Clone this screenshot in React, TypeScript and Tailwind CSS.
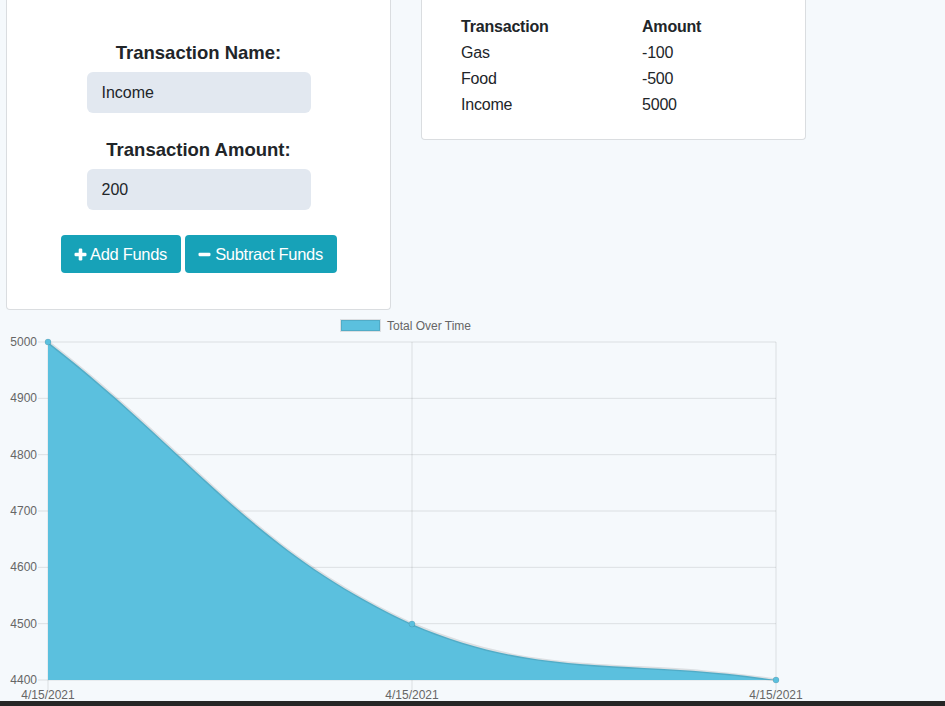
import React from "react";

const FONT = { fontFamily: '"Liberation Sans", Arial, sans-serif' };

function PlusIcon() {
  return (
    <svg width="13" height="13" viewBox="0 0 13 13" className="shrink-0">
      <rect x="4.7" y="0.5" width="3.6" height="12" rx="1.2" fill="white" />
      <rect x="0.5" y="4.7" width="12" height="3.6" rx="1.2" fill="white" />
    </svg>
  );
}

function MinusIcon() {
  return (
    <svg width="13" height="13" viewBox="0 0 13 13" className="shrink-0">
      <rect x="0.5" y="4.8" width="12" height="3.4" rx="1.1" fill="white" />
    </svg>
  );
}

const rows = [
  { name: "Gas", amount: "-100" },
  { name: "Food", amount: "-500" },
  { name: "Income", amount: "5000" },
];

function Chart() {
  const top = 31;
  const step = 338 / 6;
  const yLabels = ["5000", "4900", "4800", "4700", "4600", "4500", "4400"];
  const xs = [48, 412, 776];
  const grid = "rgba(0,0,0,0.1)";
  const curve =
    "M48,31 C193.6,143.8 250.2,237.9 412,313 C541.4,369 630.4,346.6 776,369";
  return (
    <svg width="830" height="390" viewBox="0 0 830 390" className="block shrink-0 mt-[1px]" style={FONT}>
      {/* legend */}
      <rect x="341" y="9" width="39" height="11" fill="#5bc0de" stroke="rgba(0,0,0,0.1)" strokeWidth="2" />
      <text x="387" y="19" fontSize="12" fill="#666">Total Over Time</text>
      {/* horizontal grid */}
      {yLabels.map((l, i) => {
        const y = top + i * step;
        return (
          <g key={l}>
            <line x1="38" x2="776" y1={y} y2={y} stroke={grid} strokeWidth="1" />
            <text x="37" y={y + 4} fontSize="12" fill="#666" textAnchor="end">{l}</text>
          </g>
        );
      })}
      {/* vertical grid */}
      {xs.map((x) => (
        <line key={x} x1={x} x2={x} y1={top} y2={379} stroke={grid} strokeWidth="1" />
      ))}
      {/* area */}
      <path d={curve + " L776,369 L48,369 Z"} fill="#5bc0de" />
      <path d={curve} fill="none" stroke="rgba(0,0,0,0.1)" strokeWidth="3" />
      {xs.map((x, i) => (
        <circle key={x} cx={x} cy={[31, 313, 369][i]} r="3" fill="#5bc0de" stroke="rgba(0,0,0,0.1)" strokeWidth="1" />
      ))}
      {xs.map((x) => (
        <text key={"l" + x} x={x} y="388" fontSize="12" fill="#666" textAnchor="middle">4/15/2021</text>
      ))}
    </svg>
  );
}

export default function App() {
  return (
    <div className="h-[706px] w-[945px] overflow-hidden bg-[#f5f9fc] flex flex-col text-[#212529]" style={FONT}>
      <div className="flex items-start">
        <div className="ml-[6px] w-[385px] bg-white border border-t-0 border-[#dadde0] rounded-b-[4px] flex flex-col items-center pt-[42px] pb-[36px]">
          <div className="text-[18.5px] font-bold leading-[21px]">Transaction Name:</div>
          <div className="mt-[9px] w-[224px] h-[41px] bg-[#e2e8f0] rounded-[6px] pl-[15px] flex items-center text-[16px]">Income</div>
          <div className="mt-[26px] text-[18.5px] font-bold leading-[21px]">Transaction Amount:</div>
          <div className="mt-[9px] w-[224px] h-[41px] bg-[#e2e8f0] rounded-[6px] pl-[15px] flex items-center text-[16px]">200</div>
          <div className="mt-[25px] flex gap-[4px]">
            <div className="h-[38px] w-[120px] bg-[#17a2b8] rounded-[4px] flex items-center justify-center gap-[3px] text-white text-[16.5px] tracking-[-0.3px]">
              <PlusIcon />
              <span>Add Funds</span>
            </div>
            <div className="h-[38px] w-[152px] bg-[#17a2b8] rounded-[4px] flex items-center justify-center gap-[4px] text-white text-[16.5px] tracking-[-0.3px]">
              <MinusIcon />
              <span>Subtract Funds</span>
            </div>
          </div>
        </div>
        <div className="ml-[30px] w-[385px] bg-white border border-t-0 border-[#dadde0] rounded-b-[4px] pt-[14px] pb-[21px] pl-[39px]">
          <div className="grid grid-cols-[181px_1fr] text-[16px] leading-[26px] tracking-[-0.2px]">
            <div className="font-bold">Transaction</div>
            <div className="font-bold">Amount</div>
            {rows.map((r) => (
              <React.Fragment key={r.name}>
                <div>{r.name}</div>
                <div>{r.amount}</div>
              </React.Fragment>
            ))}
          </div>
        </div>
      </div>
      <Chart />
      <div className="flex-1" />
      <div className="h-[6px] bg-[#262626] shrink-0" />
    </div>
  );
}
